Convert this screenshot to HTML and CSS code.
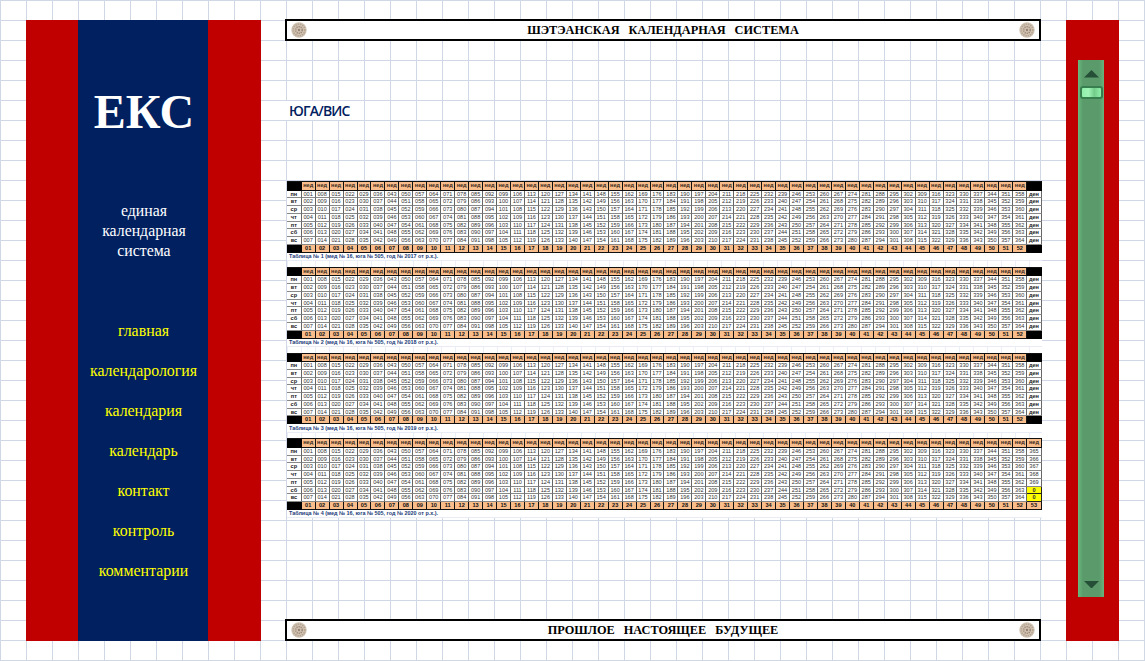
FILE: index.html
```html
<!DOCTYPE html>
<html lang="ru">
<head>
<meta charset="utf-8">
<title>ЕКС</title>
<link rel="stylesheet" href="styles.css">
</head>
<body>
<svg width="0" height="0" class="defs">
  <symbol id="rosette" viewBox="0 0 16 16">
    <circle cx="8" cy="8" r="7.7" fill="#cfc2b2"/>
    <circle cx="8" cy="8" r="5.8" fill="none" stroke="#b5a28f" stroke-width="1.6" stroke-dasharray="1.3 1"/>
    <circle cx="8" cy="8" r="3.3" fill="none" stroke="#9d8572" stroke-width="1.4" stroke-dasharray="1.2 .9"/>
    <circle cx="8" cy="8" r="1.2" fill="#9a8270"/>
  </symbol>
</svg>
<div class="page">
  <aside class="sidebar">
    <div class="panel">
      <h1>ЕКС</h1>
      <p class="sub">единая<br>календарная<br>система</p>
      <nav>
        <a class="nav-item">главная</a>
        <a class="nav-item">календарология</a>
        <a class="nav-item">календария</a>
        <a class="nav-item">календарь</a>
        <a class="nav-item">контакт</a>
        <a class="nav-item">контроль</a>
        <a class="nav-item">комментарии</a>
      </nav>
    </div>
  </aside>
  <main>
    <header class="bar"><svg class="seal"><use href="#rosette"/></svg><span>ШЭТЭАНСКАЯ КАЛЕНДАРНАЯ СИСТЕМА</span><svg class="seal"><use href="#rosette"/></svg></header>
    <h2>ЮГА/ВИС</h2>
    <section class="tables" id="tables"></section>
    <footer class="bar"><svg class="seal"><use href="#rosette"/></svg><span>ПРОШЛОЕ НАСТОЯЩЕЕ БУДУЩЕЕ</span><svg class="seal"><use href="#rosette"/></svg></footer>
  </main>
  <aside class="rail">
    <div class="scroll">
      <svg class="arrow" viewBox="0 0 16 8"><path d="M0 8L8 0L16 8Z" fill="#254f37"/></svg>
      <div class="thumb"></div>
      <svg class="arrow down" viewBox="0 0 16 8"><path d="M0 0L8 8L16 0Z" fill="#254f37"/></svg>
    </div>
  </aside>
</div>
<script src="tables.js"></script>
</body>
</html>
```
FILE: styles.css
```css
* { box-sizing: border-box; }
body {
  margin: 0;
  height: 661px;
  overflow: hidden;
  background-color: #fff;
  background-image:
    linear-gradient(to right, #d0d7e5 1px, transparent 1px),
    linear-gradient(to bottom, #d0d7e5 1px, transparent 1px);
  background-size: 26px 20px;
  font-family: "Liberation Serif", serif;
}
.defs { display: block; }
.page { display: flex; height: 641px; padding: 20px 26px 0; }
.sidebar {
  width: 235px;
  height: 621px;
  padding: 0 53px 0 52px;
  background: #c00000;
}
.panel { height: 621px; background: #002060; text-align: center; color: #fff; }
h1 { margin: 0; padding: 62px 0 0 2px; font-size: 48px; line-height: 60px; }
.sub { margin: 59px 0 60px; padding-left: 2px; font-size: 15.8px; line-height: 20px; }
.nav-item { display: block; height: 40px; padding-left: 1px; font-size: 15.9px; line-height: 20px; color: #ff0; }
main { display: flex; flex-direction: column; width: 757px; margin-left: 24px; margin-top: -1px; }
.bar {
  display: flex;
  align-items: center;
  justify-content: space-between;
  width: 756px;
  height: 22px;
  padding: 0 4px;
  border: 2px solid #000;
  background: #fff;
  font-size: 12.3px;
  font-weight: bold;
  word-spacing: 6px;
}
.seal { width: 16px; height: 16px; margin-bottom: 1px; }
h2 {
  width: 78px;
  height: 19px;
  margin: 60px 0 0 1px;
  padding-left: 3px;
  background: #fff;
  color: #002060;
  font: 600 14px/19px "Open Sans", sans-serif;
  letter-spacing: -0.8px;
}
.tables {
  width: 755px;
  height: 336px;
  margin: 61px 0 0 2px;
  background: #fff;
  font-family: "Liberation Sans", sans-serif;
}
.block { height: 85.75px; }
.grid {
  display: grid;
  grid-template-columns: 14.7px repeat(52, 13.96px) 14.38px;
  grid-template-rows: 8.6px repeat(7, 7.75px) 8.1px;
  border-top: 1px solid #111;
  height: 71px;
}
.cell {
  border-right: 1px solid #666;
  border-bottom: 1px solid #888;
  font-size: 5.6px;
  line-height: 7.4px;
  text-align: center;
  white-space: nowrap;
  overflow: hidden;
  color: #333;
}
.cell.head { background: #f9bd8b; border-color: #111; font-weight: bold; color: #3a2a1c; }
.cell.foot { color: #111; }
.cell.day { font-weight: bold; color: #222; }
.cell.black { background: #000; border-color: #000; }
.cell.zero { background: #ff0; border-color: #222; font-weight: bold; }
.caption {
  height: 8px;
  padding-left: 2px;
  font-size: 5.43px;
  line-height: 8px;
  font-weight: bold;
  color: #213a78;
  white-space: nowrap;
}
.gap {
  height: 7px;
  border-top: 1px solid #e9ebf5;
  background: repeating-linear-gradient(to right, #eceef7 0 1px, transparent 1px 14px);
}
.block:last-child .gap { height: 1px; }
footer.bar { margin-top: 102px; }
.rail { width: 53px; height: 621px; margin-left: 24px; padding: 40px 15px 0 12px; background: #c00000; }
.scroll {
  display: flex;
  flex-direction: column;
  align-items: center;
  width: 26px;
  height: 537px;
  padding: 10px 0 9px;
  background: linear-gradient(to right, #68b97d 0, #5a9a6b 5px, #5a9a6b 21px, #67b47b 26px);
}
.arrow { width: 15px; height: 7.5px; }
.thumb {
  width: 23px;
  height: 13px;
  margin-top: 8px;
  border: 2px solid #377f4e;
  border-radius: 3px;
  background: linear-gradient(to right, #8fefaa, #a0f5b6 35%, #73cc8b 65%, #8ff0aa);
}
.down { margin-top: auto; }
```
FILE: tables.js
```javascript
const days = ['пн', 'вт', 'ср', 'чт', 'пт', 'сб', 'вс'];
const root = document.getElementById('tables');
const pad = (n, len) => String(n).padStart(len, '0');

function add(parent, cls, text) {
  const el = document.createElement('div');
  el.className = cls;
  el.textContent = text;
  parent.appendChild(el);
  return el;
}

for (let t = 1; t <= 4; t++) {
  const long = t === 4;
  const block = add(root, 'block', '');
  const grid = add(block, 'grid', '');
  add(grid, 'cell black', '');
  for (let w = 1; w <= 52; w++) add(grid, 'cell head', 'нед');
  add(grid, long ? 'cell head' : 'cell black', long ? 'нед' : '');
  days.forEach((day, d) => {
    add(grid, 'cell day', day);
    for (let w = 0; w < 52; w++) add(grid, 'cell', pad(w * 7 + d + 1, 3));
    if (!long) add(grid, 'cell day', 'ден');
    else if (d < 5) add(grid, 'cell', String(365 + d));
    else add(grid, 'cell zero', '0');
  });
  add(grid, 'cell black', '');
  for (let w = 1; w <= 52; w++) add(grid, 'cell head foot', pad(w, 2));
  add(grid, long ? 'cell head foot' : 'cell black', long ? '53' : '');
  add(block, 'caption', `Таблица № ${t} (мед № 16, юга № 505, год № ${2016 + t} от р.х.).`);
  add(block, 'gap', '');
}
```
